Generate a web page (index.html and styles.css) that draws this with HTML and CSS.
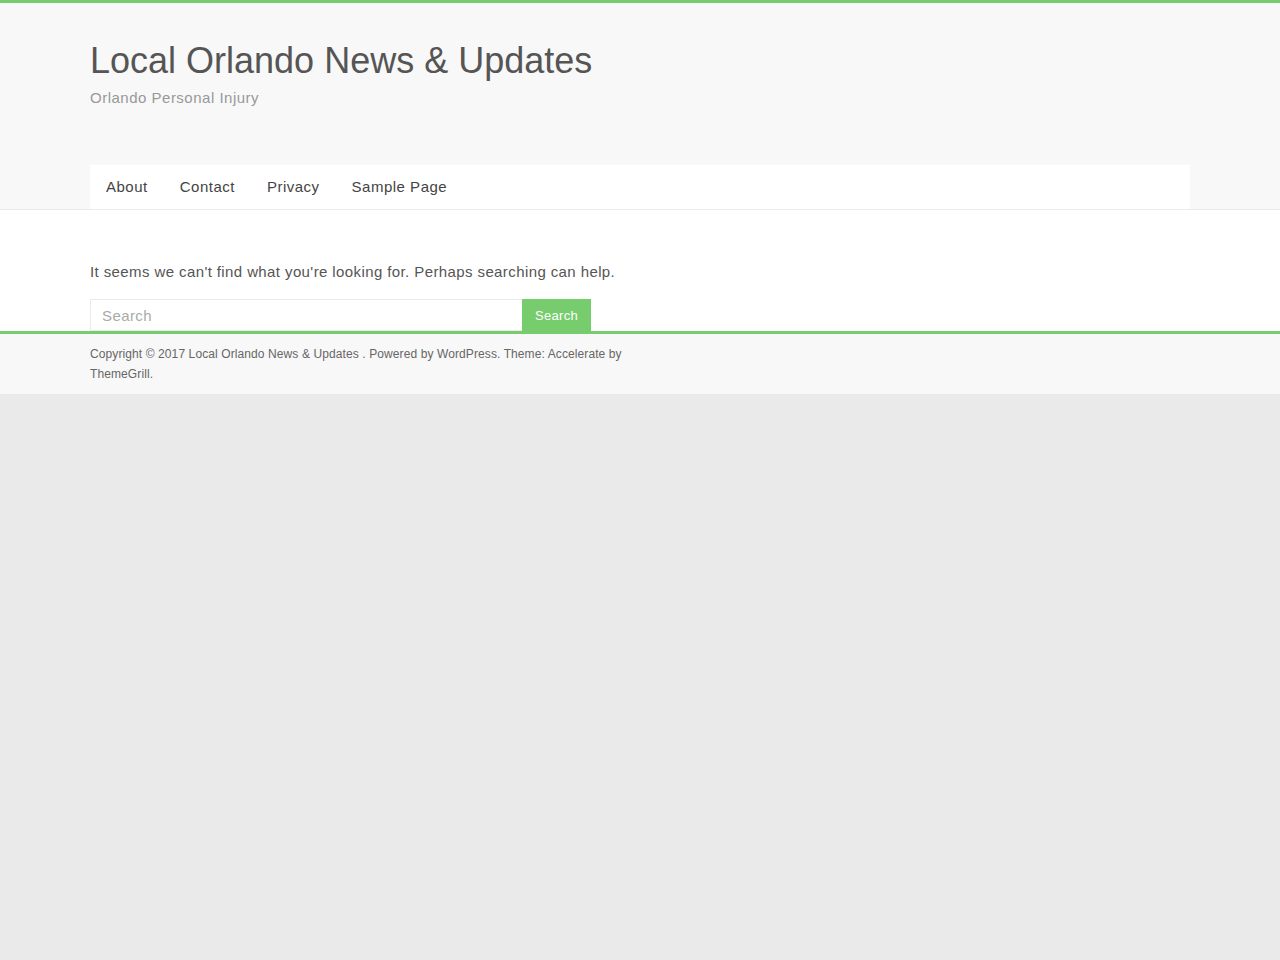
FILE: index.html
```html
<!DOCTYPE html>
<html lang="en">
<head>
    <meta charset="UTF-8">
    <meta name="viewport" content="width=device-width, initial-scale=1.0">
    <title>Local Orlando News &amp; Updates</title>
    <link rel="stylesheet" href="styles.css">
</head>
<body>
    <div class="page">
        <header class="site-header">
            <div class="inner">
                <h1 class="site-title"><a href="#">Local Orlando News &amp; Updates</a></h1>
                <p class="site-description">Orlando Personal Injury</p>

                <!-- Main menu -->
                <nav class="main-nav">
                    <a href="#">About</a>
                    <a href="#">Contact</a>
                    <a href="#">Privacy</a>
                    <a href="#">Sample Page</a>
                </nav>
            </div>
        </header>

        <main class="site-main">
            <div class="inner">
                <p class="not-found">It seems we can't find what you're looking for. Perhaps searching can help.</p>
                <form class="search-form">
                    <input type="search" placeholder="Search">
                    <button type="submit">Search</button>
                </form>
            </div>
        </main>

        <footer class="site-footer">
            <div class="inner">
                <p class="copyright">Copyright &copy; 2017 <a href="#">Local Orlando News &amp; Updates</a> . Powered by <a href="#">WordPress</a>. Theme: Accelerate by <a href="#">ThemeGrill</a>.</p>
            </div>
        </footer>
    </div>
</body>
</html>
```

FILE: styles.css
```css
body {
    margin: 0;
    background-color: #eaeaea;
    font-family: "Liberation Sans", Arial, sans-serif;
    color: #555;
}

a {
    text-decoration: none;
    color: inherit;
}

.page {
    background: #fff;
    border-top: 3px solid #77cc6d;
    box-shadow: 0 2px 6px rgba(0, 0, 0, 0.2);
}

.inner {
    width: 1100px;
    margin: 0 auto;
}

.site-header {
    background-color: #f8f8f8;
    border-bottom: 1px solid #eaeaea;
}

.site-header .inner {
    padding-top: 37px;
}

.site-title {
    margin: 0;
    font-size: 36px;
    font-weight: normal;
    line-height: 42px;
    color: #555;
}

.site-description {
    margin: 4px 0 0;
    font-size: 15px;
    line-height: 24px;
    letter-spacing: 0.5px;
    color: #999;
}

.main-nav {
    margin-top: 55px;
    background: #fff;
    display: flex;
    height: 44px;
    align-items: center;
}

.main-nav a {
    padding: 0 16px;
    font-size: 15px;
    line-height: 44px;
    letter-spacing: 0.5px;
    color: #444;
}

.site-main .inner {
    padding-top: 50px;
}

.not-found {
    margin: 0 0 15px;
    font-size: 15px;
    line-height: 24px;
    letter-spacing: 0.4px;
    color: #555;
}

.search-form {
    display: flex;
    width: 501px;
}

.search-form input {
    flex: 1;
    height: 32px;
    box-sizing: border-box;
    padding: 0 11px;
    border: 1px solid #eaeaea;
    border-right: none;
    font-family: inherit;
    font-size: 15px;
    letter-spacing: 0.4px;
    color: #666;
    outline: none;
}

.search-form input::placeholder {
    color: #aaa;
}

.search-form button {
    width: 69px;
    height: 32px;
    border: none;
    background-color: #77cc6d;
    color: #fff;
    font-family: inherit;
    font-size: 13px;
    letter-spacing: 0.3px;
    cursor: pointer;
}

.site-footer {
    background-color: #f8f8f8;
    border-top: 3px solid #77cc6d;
}

.site-footer .inner {
    padding: 10px 0 10px;
}

.copyright {
    margin: 0;
    width: 540px;
    font-size: 12px;
    line-height: 20px;
    letter-spacing: 0.1px;
    color: #666;
}
```
